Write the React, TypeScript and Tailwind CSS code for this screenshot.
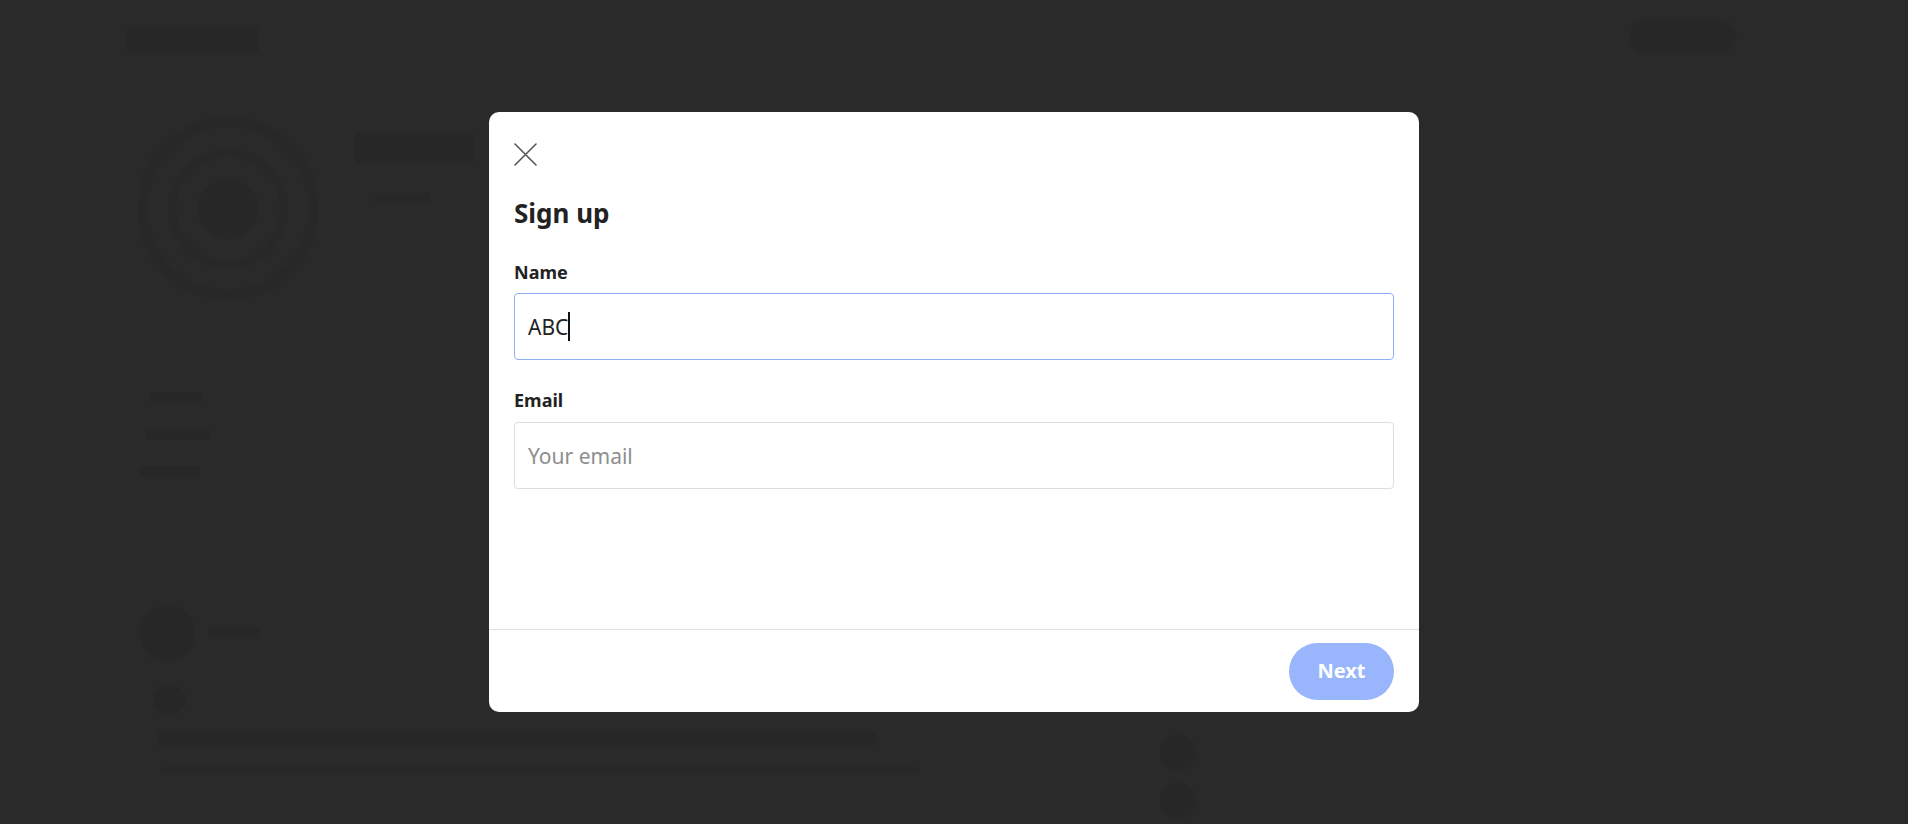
import React from "react";

const faint = "bg-[#282727]";

function Background() {
  return (
    <div className="h-[824px] w-full overflow-hidden bg-[#2a2a2a]">
      {/* top bar */}
      <div className="flex items-start justify-between pl-[127px] pr-[172px] pt-[20px]">
        <div className={`mt-[5px] h-[28px] w-[132px] rounded-[6px] ${faint}`} />
        <div className={`h-[33px] w-[107px] rounded-full ${faint}`} />
      </div>
      {/* profile */}
      <div className="flex items-start pl-[138px] pt-[64px]">
        <div className="flex h-[183px] w-[180px] items-center justify-center rounded-full border-[10px] border-[#292828]">
          <div className="flex h-[120px] w-[120px] items-center justify-center rounded-full border-[8px] border-[#292828]">
            <div className={`h-[60px] w-[60px] rounded-full ${faint}`} />
          </div>
        </div>
        <div className="ml-[37px] mt-[16px] flex flex-col gap-[30px]">
          <div className={`h-[30px] w-[118px] rounded-[4px] ${faint}`} />
          <div className={`ml-[20px] h-[10px] w-[55px] rounded-[4px] ${faint}`} />
        </div>
      </div>
      <div className="flex flex-col gap-[26px] pl-[145px] pt-[92px]">
        <div className={`ml-[5px] h-[11px] w-[53px] rounded ${faint}`} />
        <div className={`h-[11px] w-[65px] rounded ${faint}`} />
        <div className={`-ml-[5px] h-[11px] w-[60px] rounded ${faint}`} />
      </div>
      {/* feed */}
      <div className="flex pl-[140px] pt-[128px]">
        <div className="flex w-[1020px] flex-col">
          <div className="flex items-center gap-[13px]">
            <div className={`h-[56px] w-[55px] rounded-full ${faint}`} />
            <div className={`h-[12px] w-[52px] rounded ${faint}`} />
          </div>
          <div className={`ml-[13px] mt-[24px] h-[30px] w-[32px] rounded-full ${faint}`} />
          <div className={`ml-[18px] mt-[16px] h-[14px] w-[718px] rounded ${faint}`} />
          <div className={`ml-[20px] mt-[22px] h-[8px] w-[760px] rounded ${faint}`} />
        </div>
        <div className="mt-[130px] flex flex-col gap-[12px]">
          <div className={`h-[36px] w-[36px] rounded-full ${faint}`} />
          <div className={`h-[36px] w-[36px] rounded-full ${faint}`} />
        </div>
      </div>
    </div>
  );
}

function CloseIcon() {
  return (
    <svg width="23" height="23" viewBox="0 0 23 23" fill="none">
      <path d="M1 1 L22 22 M22 1 L1 22" stroke="#555555" strokeWidth="1.6" strokeLinecap="round" />
    </svg>
  );
}

export default function App() {
  return (
    <div className="relative h-[824px] w-full overflow-hidden" style={{ fontFamily: '"Noto Sans", "Open Sans", sans-serif' }}>
      <Background />
      <div className="absolute left-1/2 top-[112px] flex h-[600px] w-[930px] -translate-x-1/2 flex-col rounded-[10px] bg-white">
        <div className="flex flex-1 flex-col px-[25px] pt-[31px]">
          <button className="flex h-[23px] w-[23px] items-center justify-center" aria-label="Close">
            <CloseIcon />
          </button>
          <h2 className="mt-[29px] text-[26px] font-bold leading-[36px] text-[#222222]">Sign up</h2>
          <label className="mt-[29px] text-[18px] font-bold leading-[24px] text-[#222222]">Name</label>
          <div className="mt-[9px] flex h-[67px] items-center rounded-[4px] border border-[#8fadf7] pl-[13px]">
            <span className="text-[21px] leading-[28px] text-[#222222]">ABC</span>
            <span className="h-[29px] w-[2px] bg-[#111111]" />
          </div>
          <label className="mt-[28px] text-[18px] font-bold leading-[24px] text-[#222222]">Email</label>
          <div className="mt-[10px] flex h-[67px] items-center rounded-[4px] border border-[#dddddd] pl-[13px]">
            <span className="text-[21px] leading-[28px] text-[#8e8e8e]">Your email</span>
          </div>
        </div>
        <div className="flex h-[83px] items-center justify-end border-t border-[#e0e0e0] pr-[25px]">
          <button className="h-[57px] w-[105px] rounded-full bg-[#99b6fd] text-[20px] font-bold text-white">Next</button>
        </div>
      </div>
    </div>
  );
}
